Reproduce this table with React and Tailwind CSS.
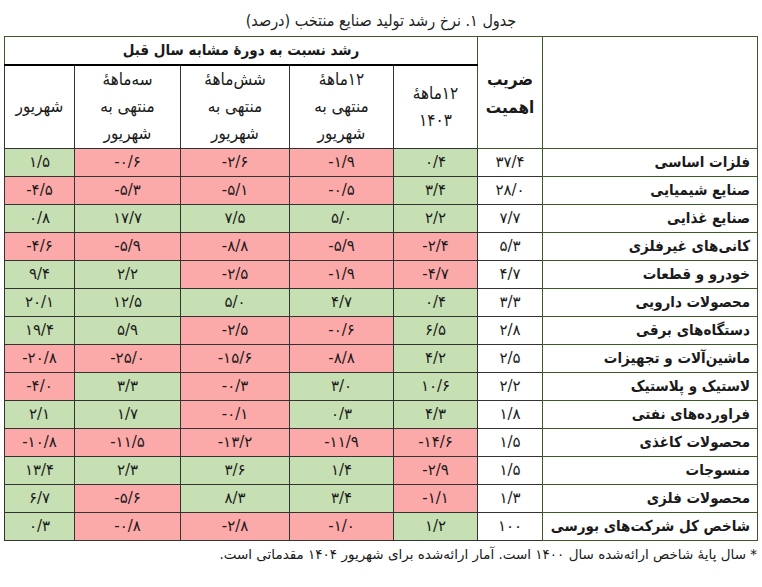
const rows = [
  ['فلزات اساسی', '۳۷/۴', ['۰/۴', '-۱/۹', '-۲/۶', '-۰/۶', '۱/۵']],
  ['صنایع شیمیایی', '۲۸/۰', ['۳/۴', '-۰/۵', '-۵/۱', '-۵/۳', '-۴/۵']],
  ['صنایع غذایی', '۷/۷', ['۲/۲', '۵/۰', '۷/۵', '۱۷/۷', '۰/۸']],
  ['کانی‌های غیرفلزی', '۵/۳', ['-۲/۴', '-۵/۹', '-۸/۸', '-۵/۹', '-۴/۶']],
  ['خودرو و قطعات', '۴/۷', ['-۴/۷', '-۱/۹', '-۲/۵', '۲/۲', '۹/۴']],
  ['محصولات دارویی', '۳/۳', ['۰/۴', '۴/۷', '۵/۰', '۱۲/۵', '۲۰/۱']],
  ['دستگاه‌های برقی', '۲/۸', ['۶/۵', '-۰/۶', '-۲/۵', '۵/۹', '۱۹/۴']],
  ['ماشین‌آلات و تجهیزات', '۲/۵', ['۴/۲', '-۸/۸', '-۱۵/۶', '-۲۵/۰', '-۲۰/۸']],
  ['لاستیک و پلاستیک', '۲/۲', ['۱۰/۶', '۳/۰', '-۰/۳', '۳/۳', '-۴/۰']],
  ['فراورده‌های نفتی', '۱/۸', ['۴/۳', '۰/۳', '-۰/۱', '۱/۷', '۲/۱']],
  ['محصولات کاغذی', '۱/۵', ['-۱۴/۶', '-۱۱/۹', '-۱۳/۲', '-۱۱/۵', '-۱۰/۸']],
  ['منسوجات', '۱/۵', ['-۲/۹', '۱/۴', '۳/۶', '۲/۳', '۱۳/۴']],
  ['محصولات فلزی', '۱/۳', ['-۱/۱', '۳/۴', '۸/۳', '-۵/۶', '۶/۷']],
  ['شاخص کل شرکت‌های بورسی', '۱۰۰', ['۱/۲', '-۱/۰', '-۲/۸', '-۰/۸', '۰/۳']],
];

const condensed = { fontFamily: "'DejaVu Sans Condensed', 'DejaVu Sans', sans-serif" };

export default function App() {
  return (
    <div
      className="w-[762px] h-[587px] bg-white text-[#1a1a1a] overflow-hidden"
      style={{ fontFamily: "'DejaVu Sans', sans-serif" }}
    >
      <div dir="rtl" className="pt-[10px] h-[36px] text-center text-[16px] leading-[22px] text-[#222]" style={condensed}>
        جدول ۱. نرخ رشد تولید صنایع منتخب (درصد)
      </div>

      <div className="px-[4px] pr-[5px]">
        <table dir="rtl" className="w-[753px] table-fixed border-collapse border border-[#3b5a26]">
          <colgroup>
            <col className="w-[215px]" />
            <col className="w-[65px]" />
            <col className="w-[84px]" />
            <col className="w-[104px]" />
            <col className="w-[109px]" />
            <col className="w-[106px]" />
            <col className="w-[70px]" />
          </colgroup>
          <thead style={condensed}>
            <tr className="h-[28px]">
              <th rowSpan={2} className="border border-[#3b5a26]" />
              <th rowSpan={2} className="border border-[#3b5a26] text-[17px] font-bold leading-[28px]">
                ضریب
                <br />
                اهمیت
              </th>
              <th colSpan={5} className="border border-[#3b5a26] border-b-2 border-b-black text-[15px] font-bold">
                رشد نسبت به دورهٔ مشابه سال قبل
              </th>
            </tr>
            <tr className="h-[84px] text-[17px] font-normal leading-[27px]">
              <th className="border border-[#333] font-normal">
                ۱۲ماههٔ
                <br />
                ۱۴۰۳
              </th>
              <th className="border border-[#333] font-normal">
                ۱۲ماههٔ
                <br />
                منتهی به
                <br />
                شهریور
              </th>
              <th className="border border-[#333] font-normal">
                شش‌ماههٔ
                <br />
                منتهی به
                <br />
                شهریور
              </th>
              <th className="border border-[#333] font-normal">
                سه‌ماههٔ
                <br />
                منتهی به
                <br />
                شهریور
              </th>
              <th className="border border-[#333] font-normal">شهریور</th>
            </tr>
          </thead>
          <tbody>
            {rows.map(([name, weight, vals]) => (
              <tr key={name} className="h-[28px]">
                <td
                  className="border border-[#3b5a26] pr-[7px] text-right text-[15px] font-bold whitespace-nowrap"
                  style={condensed}
                >
                  {name}
                </td>
                <td dir="ltr" className="border border-[#333] text-center text-[15px]">
                  {weight}
                </td>
                {vals.map((v, i) => (
                  <td
                    key={i}
                    dir="ltr"
                    className={
                      'border border-[#333] text-center text-[15px] ' +
                      (v.startsWith('-') ? 'bg-[#fca9a9]' : 'bg-[#c6e0b4]')
                    }
                  >
                    {v}
                  </td>
                ))}
              </tr>
            ))}
          </tbody>
        </table>
      </div>

      <div dir="rtl" className="pr-[5px] pt-[3px] text-[13.5px] leading-[20px] text-[#1a1a1a]">
        * سال پایهٔ شاخص ارائه‌شده سال ۱۴۰۰ است. آمار ارائه‌شده برای شهریور ۱۴۰۴ مقدماتی است.
      </div>
    </div>
  );
}
